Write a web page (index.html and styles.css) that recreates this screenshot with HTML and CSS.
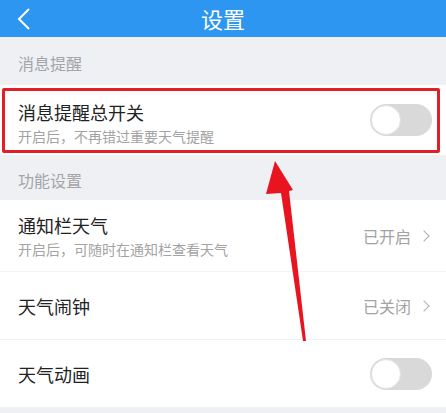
FILE: index.html
```html
<!DOCTYPE html>
<html lang="zh-CN">
<head>
    <meta charset="UTF-8">
    <meta name="viewport" content="width=device-width, initial-scale=1.0">
    <title>设置</title>
    <link rel="stylesheet" href="styles.css">
</head>
<body>
    <div class="page">
        <div class="header">
            <div class="back">
                <svg width="14" height="22" viewBox="0 0 14 22">
                    <polyline points="12,1 2,11 12,21" fill="none" stroke="#fff" stroke-width="2"/>
                </svg>
            </div>
            <div class="title">设置</div>
            <div></div>
        </div>

        <div class="section section-first">消息提醒</div>
        <div class="row row-master">
            <div class="row-text">
                <div class="row-title">消息提醒总开关</div>
                <div class="row-sub">开启后，不再错过重要天气提醒</div>
            </div>
            <div class="switch"><span class="knob"></span></div>
            <div class="mark-box"></div>
        </div>

        <div class="section section-second">功能设置</div>
        <div class="row row-notify">
            <div class="row-text">
                <div class="row-title">通知栏天气</div>
                <div class="row-sub">开启后，可随时在通知栏查看天气</div>
            </div>
            <div class="row-value">已开启<span class="chev"></span></div>
        </div>
        <div class="row row-alarm">
            <div class="row-text">
                <div class="row-title">天气闹钟</div>
            </div>
            <div class="row-value">已关闭<span class="chev"></span></div>
        </div>
        <div class="row row-anim">
            <div class="row-text">
                <div class="row-title">天气动画</div>
            </div>
            <div class="switch"><span class="knob"></span></div>
        </div>

        <!-- annotation arrow -->
        <svg class="arrow" width="446" height="413" viewBox="0 0 446 413">
            <polygon points="275,161 293,190 289,191 306,341 303,341 281,193 266,194" fill="#e8141f"/>
        </svg>
    </div>
</body>
</html>
```

FILE: styles.css
```css
body {
    margin: 0;
    background: #eef0f4;
    font-family: "Noto Sans CJK SC", "Noto Sans", sans-serif;
}

.page {
    position: relative;
    width: 446px;
    height: 413px;
    overflow: hidden;
    background: #eef0f4;
}

.header {
    height: 37px;
    background: #2d96f0;
    display: grid;
    grid-template-columns: 60px 1fr 60px;
    align-items: center;
}

.back {
    padding-left: 17px;
    display: flex;
    align-items: center;
}

.title {
    text-align: center;
    color: #fff;
    font-size: 22px;
    line-height: 37px;
}

.section {
    padding-left: 18px;
    font-size: 16px;
    color: #a3a5a8;
    display: flex;
    align-items: center;
}

.section-first {
    height: 48px;
    padding-top: 3px;
    box-sizing: border-box;
}

.section-second {
    height: 45px;
    padding-top: 4px;
    box-sizing: border-box;
}

.row {
    position: relative;
    background: #fff;
    display: flex;
    align-items: center;
    justify-content: space-between;
    padding: 0 14px 0 18px;
    box-sizing: border-box;
}

.row-master { height: 70px; }
.row-master .row-text { padding-top: 6px; }
.row-notify { height: 72px; border-bottom: 1px solid #f3f3f3; }
.row-alarm { height: 68px; border-bottom: 1px solid #f3f3f3; }
.row-anim { height: 67px; }

.row-title {
    font-size: 18px;
    color: #222;
    line-height: 24px;
}

.row-sub {
    font-size: 14px;
    color: #a3a3a3;
    line-height: 20px;
    margin-top: 2px;
}

.row-value {
    font-size: 16px;
    color: #a3a3a3;
    display: flex;
    align-items: center;
}

.chev {
    width: 7px;
    height: 7px;
    border-top: 1.5px solid #b0b0b0;
    border-right: 1.5px solid #b0b0b0;
    transform: rotate(45deg);
    margin-left: 9px;
    margin-right: 4px;
}

.switch {
    width: 62px;
    height: 32px;
    border-radius: 16px;
    background: #d9d9d9;
    position: relative;
}

.knob {
    position: absolute;
    left: 1px;
    top: 1px;
    width: 28px;
    height: 28px;
    border-radius: 50%;
    background: #fff;
    border: 1px solid #e2e2e2;
}

/* red highlight around the master switch row */
.mark-box {
    position: absolute;
    left: 2px;
    right: 6px;
    top: 3px;
    bottom: 2px;
    border: 3px solid #e31e26;
    border-radius: 2px;
}

.arrow {
    position: absolute;
    left: 0;
    top: 0;
    pointer-events: none;
}
```
